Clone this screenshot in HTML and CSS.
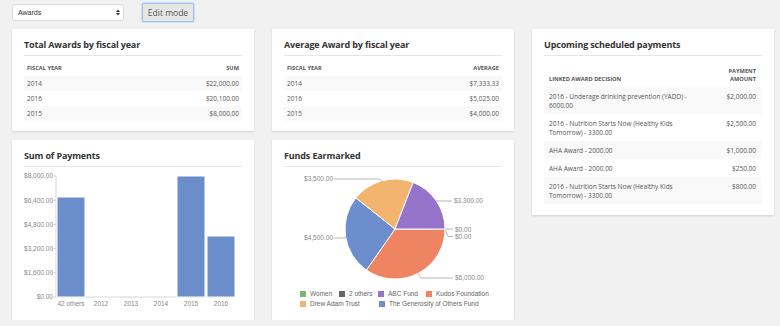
FILE: index.html
```html
<!DOCTYPE html>
<html lang="en">
<head>
    <meta charset="UTF-8">
    <title>Awards dashboard</title>
    <link rel="stylesheet" href="styles.css">
</head>
<body>
    <div class="toolbar">
        <div class="select-wrap">
            <select class="report-select">
                <option>Awards</option>
            </select>
            <svg class="select-arrows" width="4" height="7" viewBox="0 0 4 7">
                <path d="M0 3 L2 0.5 L4 3 Z M0 4 L2 6.5 L4 4 Z" fill="#333"/>
            </svg>
        </div>
        <button class="edit-button">Edit mode</button>
    </div>

    <div class="dashboard">
        <div class="card">
            <h2 class="card-title">Total Awards by fiscal year</h2>
            <table class="data-table">
                <thead>
                    <tr><th>Fiscal Year</th><th class="num">Sum</th></tr>
                </thead>
                <tbody>
                    <tr><td>2014</td><td class="num">$22,000.00</td></tr>
                    <tr><td>2016</td><td class="num">$20,100.00</td></tr>
                    <tr><td>2015</td><td class="num">$8,000.00</td></tr>
                </tbody>
            </table>
        </div>

        <div class="card">
            <h2 class="card-title">Average Award by fiscal year</h2>
            <table class="data-table">
                <thead>
                    <tr><th>Fiscal Year</th><th class="num">Average</th></tr>
                </thead>
                <tbody>
                    <tr><td>2014</td><td class="num">$7,333.33</td></tr>
                    <tr><td>2016</td><td class="num">$5,025.00</td></tr>
                    <tr><td>2015</td><td class="num">$4,000.00</td></tr>
                </tbody>
            </table>
        </div>

        <div class="card card-tall">
            <h2 class="card-title">Upcoming scheduled payments</h2>
            <table class="data-table payments-table">
                <thead>
                    <tr><th>Linked Award Decision</th><th class="num amount-col">Payment<br>Amount</th></tr>
                </thead>
                <tbody>
                    <tr><td>2016 - Underage drinking prevention (YADD) - 6000.00</td><td class="num">$2,000.00</td></tr>
                    <tr><td>2016 - Nutrition Starts Now (Healthy Kids Tomorrow) - 3300.00</td><td class="num">$2,500.00</td></tr>
                    <tr><td>AHA Award - 2000.00</td><td class="num">$1,000.00</td></tr>
                    <tr><td>AHA Award - 2000.00</td><td class="num">$250.00</td></tr>
                    <tr><td>2016 - Nutrition Starts Now (Healthy Kids Tomorrow) - 3300.00</td><td class="num">$800.00</td></tr>
                </tbody>
            </table>
        </div>

        <div class="card">
            <h2 class="card-title">Sum of Payments</h2>
            <svg class="chart" width="218" height="142" viewBox="0 0 218 142">
                <g class="axis">
                    <line x1="32" y1="8" x2="32" y2="129"/>
                    <line x1="32" y1="129" x2="212" y2="129"/>
                    <line x1="29.5" y1="8" x2="32" y2="8"/>
                    <line x1="29.5" y1="32.2" x2="32" y2="32.2"/>
                    <line x1="29.5" y1="56.4" x2="32" y2="56.4"/>
                    <line x1="29.5" y1="80.6" x2="32" y2="80.6"/>
                    <line x1="29.5" y1="104.8" x2="32" y2="104.8"/>
                    <line x1="29.5" y1="129" x2="32" y2="129"/>
                </g>
                <g class="tick-label" text-anchor="end">
                    <text x="29" y="10.3">$8,000.00</text>
                    <text x="29" y="34.5">$6,400.00</text>
                    <text x="29" y="58.7">$4,800.00</text>
                    <text x="29" y="82.9">$3,200.00</text>
                    <text x="29" y="107.1">$1,600.00</text>
                    <text x="29" y="131.3">$0.00</text>
                </g>
                <g class="bars">
                    <rect x="33" y="29" width="28" height="100"/>
                    <rect x="153" y="8" width="28" height="121"/>
                    <rect x="183" y="68" width="28" height="61"/>
                </g>
                <g class="tick-label" text-anchor="middle">
                    <text x="47" y="137.5">42 others</text>
                    <text x="77" y="137.5">2012</text>
                    <text x="107" y="137.5">2013</text>
                    <text x="137" y="137.5">2014</text>
                    <text x="167" y="137.5">2015</text>
                    <text x="197" y="137.5">2016</text>
                </g>
            </svg>
        </div>

        <div class="card">
            <h2 class="card-title">Funds Earmarked</h2>
            <svg class="chart" width="218" height="142" viewBox="0 0 218 142">
                <g class="slices">
                    <path d="M111 61 L161 61 A50 50 0 0 1 82.43 102.03 Z" fill="#ee8462"/>
                    <path d="M111 61 L82.43 102.03 A50 50 0 0 1 71.87 29.87 Z" fill="#6c8ecd"/>
                    <path d="M111 61 L71.87 29.87 A50 50 0 0 1 129.19 14.42 Z" fill="#f3b46f"/>
                    <path d="M111 61 L129.19 14.42 A50 50 0 0 1 161 61 Z" fill="#9674cc"/>
                </g>
                <g class="leaders">
                    <path d="M50 11 H96 L98 13.5"/>
                    <path d="M152 33 H168"/>
                    <path d="M161 61 H169"/>
                    <path d="M161.5 62 L164 68.5 H169"/>
                    <path d="M50 70 H61.5 L62 68.5"/>
                    <path d="M134 105.5 L137 110 H169"/>
                </g>
                <g class="tick-label">
                    <text x="49" y="13.3" text-anchor="end">$3,500.00</text>
                    <text x="49" y="72.3" text-anchor="end">$4,500.00</text>
                    <text x="170" y="35.3">$3,300.00</text>
                    <text x="171" y="64.3">$0.00</text>
                    <text x="171" y="71.3">$0.00</text>
                    <text x="171" y="112.3">$6,000.00</text>
                </g>
                <g class="legend">
                    <rect x="16" y="123" width="6" height="6" fill="#7cb86b"/>
                    <text x="26" y="128.3">Women</text>
                    <rect x="55" y="123" width="6" height="6" fill="#666666"/>
                    <text x="65" y="128.3">2 others</text>
                    <rect x="94" y="123" width="6" height="6" fill="#9674cc"/>
                    <text x="104" y="128.3">ABC Fund</text>
                    <rect x="142" y="123" width="6" height="6" fill="#ee8462"/>
                    <text x="152" y="128.3">Kudos Foundation</text>
                    <rect x="16" y="133" width="6" height="6" fill="#f3b46f"/>
                    <text x="26" y="138.3">Drew Adam Trust</text>
                    <rect x="95" y="133" width="6" height="6" fill="#6c8ecd"/>
                    <text x="105" y="138.3">The Generosity of Others Fund</text>
                </g>
            </svg>
        </div>
    </div>
</body>
</html>
```

FILE: styles.css
```css
body {
    margin: 0;
    padding: 3px 0 0 12px;
    background: #f1f1f1;
    font-family: "Open Sans", "Liberation Sans", sans-serif;
    color: #555;
}

.toolbar {
    display: flex;
    align-items: center;
    gap: 18px;
    height: 19px;
    margin-bottom: 7px;
}

.select-wrap {
    position: relative;
    width: 112px;
    height: 17px;
}

.report-select {
    display: block;
    appearance: none;
    -webkit-appearance: none;
    box-sizing: border-box;
    width: 100%;
    height: 100%;
    margin: 0;
    padding: 0 0 0 5px;
    background: #fff;
    border: 1px solid #dcdcdc;
    border-radius: 3px;
    font-family: "Liberation Sans", sans-serif;
    font-size: 7px;
    color: #333;
}

.select-arrows {
    position: absolute;
    right: 4px;
    top: 5px;
}

.edit-button {
    width: 52px;
    height: 19px;
    padding: 0;
    background: #e6e6e6;
    border: 1px solid #9fc3ea;
    border-radius: 2px;
    box-shadow: 0 0 0 1px #c9ddf3;
    font-family: "Open Sans", sans-serif;
    font-size: 8.5px;
    color: #555;
}

.dashboard {
    display: grid;
    grid-template-columns: 242px 242px 242px;
    column-gap: 18px;
    row-gap: 9px;
    align-items: start;
}

.card {
    background: #fff;
    padding: 10px 12px 10px;
    box-shadow: 0 1px 2px rgba(0, 0, 0, 0.12);
}

.card-tall {
    grid-column: 3;
    grid-row: 1 / span 2;
    padding-bottom: 11px;
}

.card-title {
    margin: 0;
    padding-bottom: 4px;
    border-bottom: 1px solid #e6e6e6;
    font-size: 9px;
    line-height: 12px;
    letter-spacing: -0.15px;
    font-weight: 700;
    color: #333;
}

.data-table {
    width: 100%;
    margin-top: 4px;
    border-collapse: collapse;
    font-size: 6.5px;
}

.data-table th {
    padding: 4px 3px;
    line-height: 8px;
    font-size: 5.7px;
    font-weight: 700;
    text-transform: uppercase;
    text-align: left;
    vertical-align: bottom;
    color: #555;
}

.data-table td {
    padding: 3px;
    line-height: 9px;
    vertical-align: top;
}

.data-table tbody tr:nth-child(odd) {
    background: #f9f9f9;
}

.data-table .num {
    text-align: right;
}

.payments-table {
    margin-top: 8px;
}

.payments-table th {
    padding: 3px 6px 4px 5px;
}

.payments-table td {
    padding: 5px 6px 4px 5px;
}

.payments-table .amount-col {
    width: 50px;
}

.chart {
    display: block;
    margin-top: 1px;
    font-family: "Liberation Sans", sans-serif;
}

.axis line {
    stroke: #ccc;
    stroke-width: 0.8;
}

.tick-label text {
    font-size: 6.5px;
    fill: #888;
}

.bars rect {
    fill: #6b8ecb;
    stroke: #fff;
    stroke-width: 1;
}

.slices path {
    stroke: #fff;
    stroke-width: 1;
}

.leaders path {
    fill: none;
    stroke: #999;
    stroke-width: 0.7;
}

.legend text {
    font-size: 6.5px;
    fill: #666;
}
```
